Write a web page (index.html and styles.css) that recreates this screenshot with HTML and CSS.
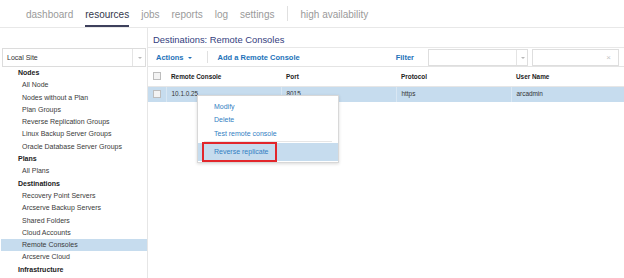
FILE: index.html
```html
<!DOCTYPE html>
<html lang="en">
<head>
    <meta charset="UTF-8">
    <title>Destinations: Remote Consoles</title>
    <link rel="stylesheet" href="styles.css">
</head>
<body>
    <div class="app">
        <nav class="topnav">
            <a class="nav-item">dashboard</a>
            <a class="nav-item active">resources</a>
            <a class="nav-item">jobs</a>
            <a class="nav-item">reports</a>
            <a class="nav-item">log</a>
            <a class="nav-item">settings</a>
            <span class="nav-divider"></span>
            <a class="nav-item">high availability</a>
        </nav>

        <div class="page">
            <aside class="sidebar">
                <div class="site-select">
                    <span class="site-name">Local Site</span>
                    <span class="select-arrow"></span>
                </div>
                <ul class="tree">
                    <li class="tree-head">Nodes</li>
                    <li class="tree-item">All Node</li>
                    <li class="tree-item">Nodes without a Plan</li>
                    <li class="tree-item">Plan Groups</li>
                    <li class="tree-item">Reverse Replication Groups</li>
                    <li class="tree-item">Linux Backup Server Groups</li>
                    <li class="tree-item">Oracle Database Server Groups</li>
                    <li class="tree-head">Plans</li>
                    <li class="tree-item">All Plans</li>
                    <li class="tree-head">Destinations</li>
                    <li class="tree-item">Recovery Point Servers</li>
                    <li class="tree-item">Arcserve Backup Servers</li>
                    <li class="tree-item">Shared Folders</li>
                    <li class="tree-item">Cloud Accounts</li>
                    <li class="tree-item selected">Remote Consoles</li>
                    <li class="tree-item">Arcserve Cloud</li>
                    <li class="tree-head">Infrastructure</li>
                </ul>
            </aside>

            <main class="content">
                <h1 class="page-title">Destinations: Remote Consoles</h1>

                <div class="toolbar">
                    <a class="tool-link">Actions <span class="caret"></span></a>
                    <span class="tool-sep"></span>
                    <a class="tool-link">Add a Remote Console</a>
                    <span class="filter-label">Filter</span>
                    <div class="filter-select"><span class="select-arrow"></span></div>
                    <div class="filter-text"><span class="clear">×</span></div>
                </div>

                <table class="grid">
                    <colgroup>
                        <col class="col-check">
                        <col class="col-wide">
                        <col class="col-wide">
                        <col class="col-wide">
                        <col>
                    </colgroup>
                    <thead>
                        <tr>
                            <th><span class="checkbox"></span></th>
                            <th>Remote Console</th>
                            <th>Port</th>
                            <th>Protocol</th>
                            <th>User Name</th>
                        </tr>
                    </thead>
                    <tbody>
                        <tr class="row-selected">
                            <td><span class="checkbox"></span></td>
                            <td>10.1.0.25</td>
                            <td>8015</td>
                            <td>https</td>
                            <td>arcadmin</td>
                        </tr>
                    </tbody>
                </table>
            </main>
        </div>

        <!-- right-click menu on the selected row -->
        <ul class="context-menu">
            <li class="menu-item">Modify</li>
            <li class="menu-item">Delete</li>
            <li class="menu-item">Test remote console</li>
            <li class="menu-sep"></li>
            <li class="menu-item active">
                Reverse replicate
                <span class="mark-box"></span>
            </li>
        </ul>
    </div>
</body>
</html>
```

FILE: styles.css
```css
* {
    margin: 0;
    padding: 0;
    box-sizing: border-box;
}

body {
    font-family: "Liberation Sans", Arial, sans-serif;
    background: #fff;
    color: #333;
}

.app {
    position: relative;
    width: 624px;
    height: 278px;
    overflow: hidden;
}

/* top navigation */
.topnav {
    display: flex;
    height: 28px;
    padding-left: 26px;
    border-bottom: 1px solid #e8e8e8;
}

.nav-item {
    height: 27px;
    padding-top: 4px;
    line-height: 21px;
    font-size: 10px;
    color: #9a9a9a;
    margin-right: 12px;
    border-bottom: 2px solid transparent;
}

.nav-item.active {
    color: #34374c;
    border-bottom-color: #3d405c;
}

.nav-divider {
    width: 1px;
    height: 15px;
    margin: 6px 12px 0 1px;
    background: #e0e0e0;
}

.page {
    display: flex;
}

/* left tree */
.sidebar {
    width: 148px;
    padding-top: 20px;
    border-right: 1px solid #e6e6e6;
    height: 250px;
}

.site-select {
    display: flex;
    align-items: center;
    height: 19px;
    margin: 0 1px 0 2px;
    border: 1px solid #dcdcdc;
    font-size: 7px;
}

.site-name {
    flex: 1;
    padding-left: 4px;
    color: #333;
}

.select-arrow {
    position: relative;
    width: 13px;
    height: 100%;
    border-left: 1px solid #e4e4e4;
}

.select-arrow::after {
    content: '';
    position: absolute;
    left: 5px;
    top: 8px;
    border-left: 2px solid transparent;
    border-right: 2px solid transparent;
    border-top: 2px solid #b8b8b8;
}

.tree {
    list-style: none;
}

.tree li {
    height: 12.3px;
    line-height: 12.3px;
    font-size: 7px;
    white-space: nowrap;
}

.tree-head {
    padding-left: 18px;
    font-weight: bold;
    color: #222;
}

.tree-item {
    padding-left: 22px;
    color: #3a3a3a;
}

.tree-item.selected {
    background: #c6dcee;
    margin: 0 0 0 1px;
    padding-left: 21px;
}

/* main panel */
.content {
    flex: 1;
}

.page-title {
    height: 19px;
    padding: 4px 0 0 5px;
    line-height: 15px;
    font-size: 9.4px;
    font-weight: normal;
    color: #34407e;
}

.toolbar {
    display: flex;
    align-items: center;
    height: 20px;
    padding: 0 5px 0 8px;
    border-top: 1px solid #e8e8e8;
    border-bottom: 1px solid #e4e4e4;
}

.tool-link {
    font-size: 7.5px;
    font-weight: bold;
    color: #2272b9;
}

.caret {
    display: inline-block;
    margin-left: 2px;
    vertical-align: middle;
    border-left: 2px solid transparent;
    border-right: 2px solid transparent;
    border-top: 2px solid #2272b9;
}

.tool-sep {
    width: 1px;
    height: 12px;
    margin: 0 10px 0 15px;
    background: #e0e0e0;
}

.filter-label {
    margin-left: auto;
    margin-right: 14px;
    font-size: 7.5px;
    font-weight: bold;
    color: #2272b9;
}

.filter-select {
    display: flex;
    justify-content: flex-end;
    width: 100px;
    height: 17px;
    border: 1px solid #dedede;
}

.filter-select .select-arrow {
    width: 11px;
}

.filter-select .select-arrow::after {
    left: 4px;
    top: 7px;
}

.filter-text {
    display: flex;
    align-items: center;
    justify-content: flex-end;
    width: 87px;
    height: 17px;
    margin-left: 4px;
    padding-right: 7px;
    border: 1px solid #dedede;
}

.clear {
    font-size: 8px;
    color: #c4c4c4;
}

/* grid */
.grid {
    width: 100%;
    border-collapse: collapse;
    table-layout: fixed;
    font-size: 6.4px;
}

.col-check {
    width: 18px;
}

.col-wide {
    width: 115px;
}

.grid th,
.grid td {
    padding: 0 5px;
    text-align: left;
    white-space: nowrap;
}

.grid th {
    height: 19px;
    font-weight: bold;
    color: #222;
    border-bottom: 1px solid #e6e6e6;
}

.grid td {
    height: 16px;
    padding-bottom: 1px;
    color: #333;
    border-left: 1px solid #d9e7f3;
}

.grid td:first-child {
    border-left: none;
}

.grid th:first-child,
.grid td:first-child {
    padding: 0 0 0 5px;
}

.row-selected {
    background: #c6dcee;
}

.checkbox {
    display: block;
    width: 8px;
    height: 8px;
    border: 1px solid #bdbdbd;
    background: #f3f3f3;
}

/* context menu */
.context-menu {
    position: absolute;
    left: 197px;
    top: 95px;
    width: 142px;
    padding: 4px 0 1px;
    list-style: none;
    background: #fff;
    border: 1px solid #d8d8d8;
    box-shadow: 0 1px 3px rgba(0, 0, 0, 0.15);
}

.menu-item {
    height: 13.3px;
    line-height: 13.3px;
    padding-left: 16px;
    font-size: 7px;
    color: #3380c3;
}

.menu-sep {
    height: 1px;
    margin: 1px 6px;
    background: #e6e6e6;
}

.menu-item.active {
    position: relative;
    height: 18px;
    line-height: 18px;
    background: #c6dcee;
}

.mark-box {
    position: absolute;
    left: 4px;
    top: -1px;
    width: 75px;
    height: 20px;
    border: 2px solid #e2262b;
}
```
